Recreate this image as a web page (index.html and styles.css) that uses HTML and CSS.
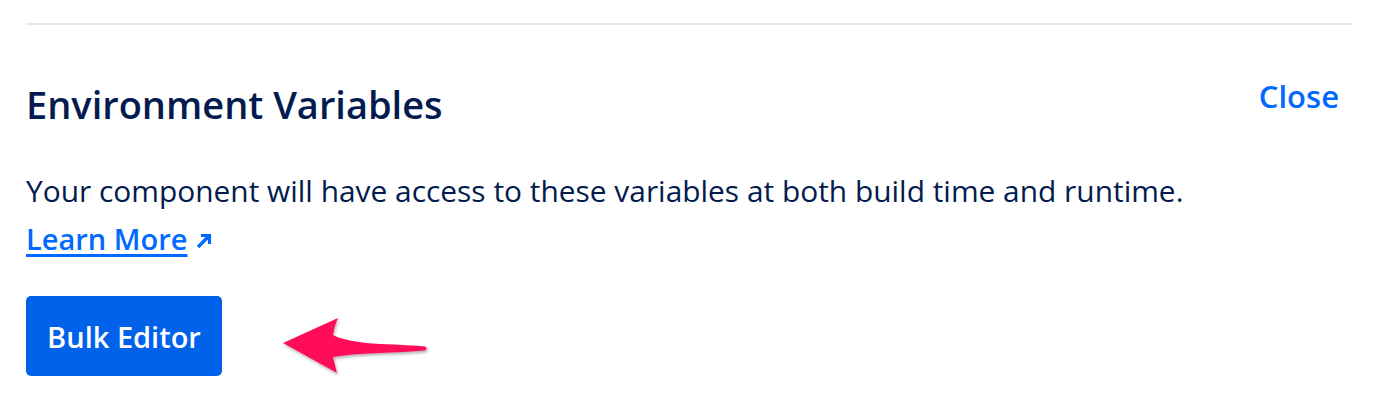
FILE: index.html
```html
<!DOCTYPE html>
<html>
<head>
<meta charset="utf-8">
<link rel="stylesheet" href="styles.css">
</head>
<body>
<div class="panel">
  <hr class="divider">
  <div class="header">
    <h2 class="title">Environment Variables</h2>
    <a class="close" href="#">Close</a>
  </div>
  <p class="desc">Your component will have access to these variables at both build time and runtime.</p>
  <a class="learn" href="#"><span class="learn-text">Learn More</span><svg class="ext" width="18" height="18" viewBox="0 0 18 18"><path d="M3 15 L14 4 M6 3.5 H14.5 V12" fill="none" stroke="#0069ff" stroke-width="3.2" stroke-linecap="butt" stroke-linejoin="miter"/></svg></a>
  <div class="actions">
    <button class="bulk">Bulk Editor</button>
    <svg class="pointer" width="160" height="72" viewBox="0 0 160 72">
      <defs>
        <filter id="sh" x="-20%" y="-30%" width="140%" height="160%">
          <feDropShadow dx="1" dy="2" stdDeviation="1.8" flood-color="#000" flood-opacity="0.3"/>
        </filter>
      </defs>
      <path filter="url(#sh)" fill="#ff105a" d="M3 31 L58 6 Q54 14 53 23 Q66 30 100 32 Q130 33 145 34.5 Q148.5 36.5 145 38.5 Q125 40 100 41 Q70 42 53 45 Q55 53 57 61 Z"/>
    </svg>
  </div>
</div>
</body>
</html>
```
FILE: styles.css
```css
html, body {
  margin: 0;
  padding: 0;
  background: #ffffff;
}
body {
  font-family: "Open Sans", "Liberation Sans", sans-serif;
  color: #031b4e;
}
.panel {
  padding: 23px 28px 0 26px;
}
.divider {
  border: 0;
  height: 2px;
  background: #e5e8ed;
  margin: 0;
}
.header {
  display: flex;
  justify-content: space-between;
  align-items: flex-start;
  margin-top: 55px;
}
.title {
  margin: 0;
  font-size: 38px;
  font-weight: 600;
  line-height: 48px;
  color: #031b4e;
}
.close {
  color: #0069ff;
  font-size: 31px;
  font-weight: 600;
  text-decoration: none;
  line-height: 36px;
  margin-top: -2px;
  margin-right: 13px;
}
.desc {
  margin: 39px 0 0 0;
  font-size: 29.9px;
  line-height: 48px;
  color: #031b4e;
}
.learn {
  display: inline-flex;
  align-items: center;
  gap: 8px;
  color: #0069ff;
  font-size: 29px;
  font-weight: 600;
  line-height: 48px;
  text-decoration: none;
}
.learn-text {
  text-decoration: underline;
  text-decoration-thickness: 3px;
  text-underline-offset: 4px;
}
.ext {
  margin-top: 4px;
}
.actions {
  display: flex;
  align-items: flex-start;
  margin-top: 33px;
}
.bulk {
  width: 196px;
  height: 80px;
  border: 0;
  border-radius: 5px;
  background: #0061eb;
  color: #ffffff;
  font-family: "Open Sans", "Liberation Sans", sans-serif;
  font-size: 29px;
  font-weight: 600;
  padding: 0;
}
.pointer {
  margin-left: 58px;
  margin-top: 16px;
}
```
